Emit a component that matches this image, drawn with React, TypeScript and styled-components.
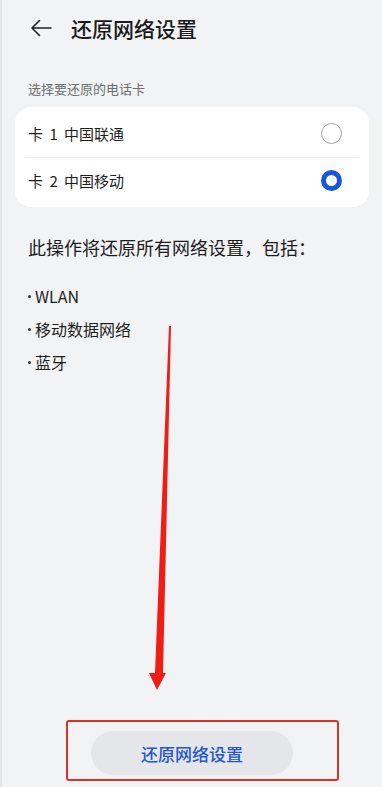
import React, { useState } from "react";
import styled, { createGlobalStyle } from "styled-components";

const GlobalStyle = createGlobalStyle`
  html, body {
    margin: 0;
    padding: 0;
    background: #f1f3f5;
  }
  body {
    font-family: "Noto Sans CJK SC", "Noto Sans", sans-serif;
    color: #191919;
  }
  * {
    box-sizing: border-box;
  }
`;

type SimCard = {
  slot: number;
  carrier: string;
};

const simCards: SimCard[] = [
  { slot: 1, carrier: "中国联通" },
  { slot: 2, carrier: "中国移动" },
];

const resetItems = ["WLAN", "移动数据网络", "蓝牙"];

const App = () => {
  const [selected, setSelected] = useState(2);

  return (
    <>
      <GlobalStyle />
      <SPage>
        <SHeader>
          <SBackButton aria-label="返回">
            <svg width="22" height="18" viewBox="0 0 22 18" fill="none">
              <path
                d="M21 9H2M9.5 1.5L2 9l7.5 7.5"
                stroke="#222"
                strokeWidth="1.6"
                strokeLinecap="round"
                strokeLinejoin="round"
              />
            </svg>
          </SBackButton>
          <STitle>还原网络设置</STitle>
        </SHeader>

        <SSectionLabel>选择要还原的电话卡</SSectionLabel>
        <SCard>
          {simCards.map((sim, idx) => (
            <SSimRow
              key={sim.slot}
              $divider={idx > 0}
              onClick={() => setSelected(sim.slot)}
            >
              <SSimName>
                卡 {sim.slot} {sim.carrier}
              </SSimName>
              <SRadio $checked={selected === sim.slot} />
            </SSimRow>
          ))}
        </SCard>

        <SDescription>此操作将还原所有网络设置，包括：</SDescription>
        <SList>
          {resetItems.map((item) => (
            <SListItem key={item}>{item}</SListItem>
          ))}
        </SList>

        <SFooter>
          <SResetButton>还原网络设置</SResetButton>
          <SHighlightFrame />
        </SFooter>

        {/* 标注箭头 */}
        <SArrow width="382" height="787" viewBox="0 0 382 787">
          <polygon
            points="169,326 171,326 163,673 166,673 157,690 149,673 155,673"
            fill="#f01c16"
          />
        </SArrow>
      </SPage>
    </>
  );
};

export default App;

const SPage = styled.div`
  position: relative;
  display: flex;
  flex-direction: column;
  min-height: 100vh;
  border-left: 2px solid #e3e5e7;
  background: #f1f3f5;
  overflow: hidden;
`;

const SHeader = styled.header`
  display: flex;
  align-items: center;
  height: 56px;
  padding-left: 27px;
  gap: 18px;
`;

const SBackButton = styled.button`
  display: flex;
  align-items: center;
  justify-content: center;
  width: 24px;
  height: 24px;
  padding: 0;
  border: none;
  background: none;
`;

const STitle = styled.h1`
  margin: 0;
  font-size: 21px;
  font-weight: 500;
  color: #1a1a1a;
`;

const SSectionLabel = styled.div`
  margin-top: 24px;
  padding-left: 26px;
  font-size: 13px;
  line-height: 18px;
  color: #6e6e6e;
`;

const SCard = styled.div`
  margin: 9px 13px 0 13px;
  padding: 3px 0;
  background: #ffffff;
  border-radius: 16px;
`;

const SSimRow = styled.div<{ $divider: boolean }>`
  position: relative;
  display: flex;
  align-items: center;
  justify-content: space-between;
  height: 47px;
  padding: 0 27px 0 13px;
  cursor: pointer;

  &::before {
    content: "";
    display: ${({ $divider }) => ($divider ? "block" : "none")};
    position: absolute;
    top: 0;
    left: 10px;
    right: 10px;
    height: 1px;
    background: #eef0f2;
  }
`;

const SSimName = styled.span`
  font-size: 15px;
  word-spacing: 3px;
  color: #1e1e1e;
`;

const SRadio = styled.span<{ $checked: boolean }>`
  width: 21px;
  height: 21px;
  border-radius: 50%;
  border: ${({ $checked }) =>
    $checked ? "5.5px solid #1a56d8" : "1px solid #a3a3a3"};
  background: #ffffff;
`;

const SDescription = styled.p`
  margin: 27px 0 0 0;
  padding-left: 26px;
  font-size: 18px;
  line-height: 26px;
  color: #1c1c1c;
`;

const SList = styled.ul`
  list-style: none;
  margin: 25px 0 0 0;
  padding: 0 0 0 26px;
  display: flex;
  flex-direction: column;
  gap: 10px;
`;

const SListItem = styled.li`
  display: flex;
  align-items: center;
  gap: 4px;
  font-size: 16px;
  line-height: 23px;
  color: #1e1e1e;

  &::before {
    content: "";
    width: 3px;
    height: 3px;
    border-radius: 50%;
    background: #333333;
  }
`;

const SFooter = styled.div`
  position: relative;
  margin-top: auto;
  display: flex;
  justify-content: center;
  padding: 0 0 12px 0;
`;

const SResetButton = styled.button`
  width: 202px;
  height: 44px;
  border: none;
  border-radius: 22px;
  background: #e4e6e9;
  color: #2557cc;
  font-family: "Noto Sans CJK SC", "Noto Sans", sans-serif;
  font-size: 17px;
  font-weight: 500;
`;

const SHighlightFrame = styled.div`
  position: absolute;
  left: 64px;
  top: -11px;
  width: 273px;
  height: 61px;
  border: 2.5px solid #d6332b;
  border-radius: 3px;
  pointer-events: none;
`;

const SArrow = styled.svg`
  position: absolute;
  top: 0;
  left: -2px;
  pointer-events: none;
`;
